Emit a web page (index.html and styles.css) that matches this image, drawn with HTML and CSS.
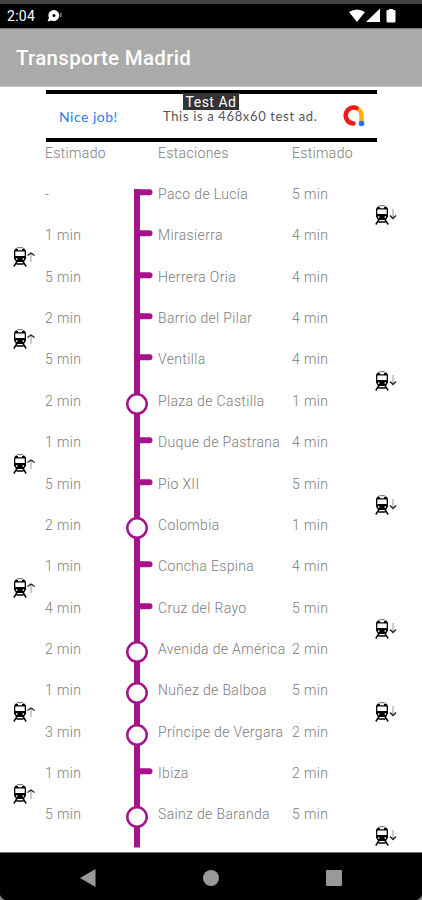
FILE: index.html
```html
<!DOCTYPE html>
<html lang="es">
<head>
    <meta charset="UTF-8">
    <meta name="viewport" content="width=device-width, initial-scale=1.0">
    <title>Transporte Madrid</title>
    <link rel="stylesheet" href="styles.css">
</head>
<body>
    <svg class="symbols">
        <symbol id="train" viewBox="0 0 14 20">
            <path class="roof" d="M2 2.500 4.500.7h5L12 2.500"/>
            <path d="M1 3.500 2.500 2h9L13 3.500v8L11 15H3L1 11.500z"/>
            <path class="window" d="M5 2h4v1.300H5zM2.300 4.500h9.400v4.500H2.300zM3 11.300h1.400v1.400H3zM9.600 11.300H11v1.400H9.600z"/>
            <path class="rails" d="M4 14.500.8 19.500M10 14.500l3.200 5M3.500 17h7"/>
        </symbol>
        <symbol id="down" viewBox="0 0 8 12">
            <path class="arrow faint" d="M4 0v9"/>
            <path class="arrow" d="M1 6.500 4 9.500l3-3"/>
        </symbol>
        <symbol id="up" viewBox="0 0 8 12">
            <path class="arrow faint" d="M4 3v8"/>
            <path class="arrow" d="M.5 4.500 4 2l3.500 2.500"/>
        </symbol>
    </svg>

    <div class="status-bar">
        <span class="clock">2:04</span>
        <svg width="16" height="14" viewBox="0 0 16 14">
            <path d="M7 1a5.500 5.500 0 1 1-2.500 10.500L.5 12.500 2 9A5.500 5.500 0 0 1 7 1z"/>
            <circle cx="7" cy="6.500" r="1.500" fill="#000"/>
            <path d="M13.300 4h1.200v4h-1.200z" fill="#999"/>
        </svg>
        <svg class="signals" width="48" height="16" viewBox="0 0 48 16">
            <path d="M0 4Q8-1 16 4L8 14zM17 14 31 .5V14zM37.500 3q0-1 1-1h1.500V1h4v1h1.500q1 0 1 1v10q0 1.500-1.500 1.500h-6q-1.500 0-1.500-1.500z"/>
        </svg>
    </div>

    <header>
        <h1>Transporte Madrid</h1>
    </header>

    <main>
        <div class="ad">
            <span class="ad-link">Nice job!</span>
            <span class="ad-text">This is a 468x60 test ad.</span>
            <svg class="ad-logo" width="22" height="22" viewBox="0 0 22 22">
                <path d="M11 2.500a8 8 0 0 1 7.500 8V16" stroke="#fbb404"/>
                <path d="M13.500 3A8 8 0 1 0 10.500 18.500" stroke="#f01c1c"/>
                <circle cx="18.500" cy="18.500" r="2.800" fill="#2473e8"/>
            </svg>
            <span class="ad-badge">Test Ad</span>
        </div>

        <div class="row titles">
            <span></span>
            <span>Estimado</span>
            <span></span>
            <span>Estaciones</span>
            <span>Estimado</span>
        </div>
        <div id="stations"></div>
    </main>

    <div class="nav-bar">
        <svg width="18" height="18" viewBox="0 0 18 18"><path d="M1 9 16.500 0v18z"/></svg>
        <svg width="18" height="18" viewBox="0 0 18 18"><circle cx="9" cy="9" r="8"/></svg>
        <svg width="18" height="18" viewBox="0 0 18 18"><rect x="1" y="1" width="16" height="16" rx="1"/></svg>
    </div>

    <script>
        // [up estimate, station, down estimate, transfer, trains after the station]
        const stations = [
            ['-', 'Paco de Lucía', '5 min', false, 'down'],
            ['1 min', 'Mirasierra', '4 min', false, 'up'],
            ['5 min', 'Herrera Oria', '4 min', false, ''],
            ['2 min', 'Barrio del Pilar', '4 min', false, 'up'],
            ['5 min', 'Ventilla', '4 min', false, 'down'],
            ['2 min', 'Plaza de Castilla', '1 min', true, ''],
            ['1 min', 'Duque de Pastrana', '4 min', false, 'up'],
            ['5 min', 'Pio XII', '5 min', false, 'down'],
            ['2 min', 'Colombia', '1 min', true, ''],
            ['1 min', 'Concha Espina', '4 min', false, 'up'],
            ['4 min', 'Cruz del Rayo', '5 min', false, 'down'],
            ['2 min', 'Avenida de América', '2 min', true, ''],
            ['1 min', 'Nuñez de Balboa', '5 min', true, 'up down'],
            ['3 min', 'Príncipe de Vergara', '2 min', true, ''],
            ['1 min', 'Ibiza', '2 min', false, 'up'],
            ['5 min', 'Sainz de Baranda', '5 min', true, 'down']
        ];

        function train(direction, trains) {
            if (!trains.split(' ').includes(direction)) {
                return '<span></span>';
            }
            return `<span class="train ${direction}">
                <svg width="14" height="20"><use href="#train"/></svg>
                <svg width="8" height="12"><use href="#${direction}"/></svg>
            </span>`;
        }

        function track(transfer, index) {
            const top = index === 0 ? 6 : 0;
            const bottom = index === stations.length - 1 ? 44.5 : 42;
            const stop = transfer
                ? '<circle cx="12" cy="14" r="9.700"/>'
                : '<path class="stop" d="M12 9.300h12.500"/>';
            return `<svg class="track" width="28" height="41.370">
                <path class="line" d="M12 ${top}V${bottom}"/>${stop}
            </svg>`;
        }

        document.getElementById('stations').innerHTML = stations.map(([up, name, down, transfer, trains], index) => `
            <div class="row">
                ${train('up', trains)}
                <span>${up}</span>
                ${track(transfer, index)}
                <span>${name}</span>
                <span>${down}</span>
                ${train('down', trains)}
            </div>`).join('');
    </script>
</body>
</html>
```

FILE: styles.css
```css
* {
    box-sizing: border-box;
}

body {
    display: flex;
    flex-direction: column;
    height: 900px;
    margin: 0;
    overflow: hidden;
    background-color: white;
    color: #7c7c7c;
    font-family: Roboto, sans-serif;
    font-size: 14px;
}

svg {
    display: block;
    flex-shrink: 0;
}

.symbols {
    position: absolute;
    width: 0;
    height: 0;
}

.status-bar {
    display: flex;
    align-items: center;
    height: 29px;
    padding: 0 25px 1px 7px;
    border-top: 4px solid #444;
    border-bottom: 1px solid #777;
    background-color: black;
    color: white;
    fill: white;
}

.clock {
    width: 40px;
    letter-spacing: 0.3px;
}

.signals {
    margin-left: auto;
}

header {
    display: flex;
    align-items: center;
    height: 58px;
    padding-left: 16px;
    border-bottom: 1px solid #c4c4c4;
    background-color: #aaa;
}

h1 {
    margin: 0;
    color: white;
    font-size: 20.5px;
    font-weight: 500;
    letter-spacing: 0.3px;
}

main {
    flex: 1;
    min-height: 0;
    padding-top: 3px;
}

.ad {
    position: relative;
    display: flex;
    align-items: center;
    width: 331px;
    height: 52px;
    margin-left: 46px;
    padding: 0 12px 0 13px;
    border: solid black;
    border-width: 4px 0;
    background-color: white;
    color: #555;
    font-family: Lato, sans-serif;
    font-size: 13px;
}

.ad-link {
    width: 104px;
    color: #2d7bf0;
    font-size: 14px;
    letter-spacing: 0.5px;
}

.ad-text {
    flex: 1;
    letter-spacing: 0.65px;
    white-space: nowrap;
}

.ad-logo {
    fill: none;
    stroke-width: 4.5;
    stroke-linecap: round;
}

.ad-badge {
    position: absolute;
    top: -1px;
    left: 137px;
    width: 56px;
    height: 17px;
    background-color: #333;
    color: white;
    font-family: Roboto, sans-serif;
    font-size: 14px;
    line-height: 18px;
    text-align: center;
    letter-spacing: 0.5px;
    white-space: nowrap;
}

.row {
    display: grid;
    grid-template-columns: 45px 80px 33px 134px 82px 48px;
    height: 41.37px;
    line-height: 23px;
    font-weight: 300;
    letter-spacing: 0.35px;
    white-space: nowrap;
}

.titles {
    height: 41px;
}

.track {
    overflow: visible;
    fill: white;
    stroke: #a5128b;
    stroke-width: 2.5;
}

.track .line {
    stroke-width: 6;
}

.track .stop {
    stroke-width: 6;
    stroke-linecap: round;
}

.train {
    display: flex;
    align-items: center;
    align-self: end;
    height: 20px;
    margin-bottom: -1px;
    padding-left: 13px;
}

.train.down {
    padding-left: 1px;
}

.window {
    fill: white;
}

.roof,
.rails,
.arrow {
    fill: none;
    stroke: black;
    stroke-width: 1.4;
}

.roof {
    stroke: #666;
    stroke-width: 1;
}

.arrow {
    stroke: #222;
}

.faint {
    stroke: #999;
    stroke-width: 1;
}

.nav-bar {
    display: flex;
    justify-content: space-between;
    align-items: center;
    height: 48px;
    padding: 2px 79px 0;
    border-top: 1px solid #777;
    background:
        radial-gradient(circle at 100% 0, black 8px, #888 9px) left bottom / 8px 8px no-repeat,
        radial-gradient(circle at 0 0, black 8px, #888 9px) right bottom / 8px 8px no-repeat,
        black;
    fill: #999;
}
```
